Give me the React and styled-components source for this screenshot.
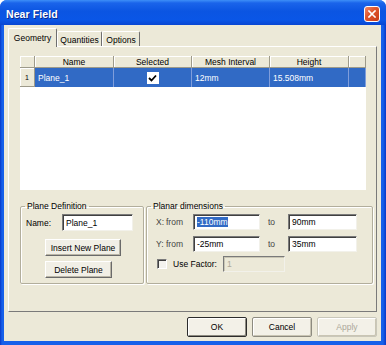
import React from 'react';
import styled, { createGlobalStyle } from 'styled-components';

const GlobalStyle = createGlobalStyle`
    html, body {
        margin: 0;
        padding: 0;
        background: #ffffff;
    }
    body {
        width: 386px;
        height: 345px;
        overflow: hidden;
        font-family: "Liberation Sans", Arial, sans-serif;
        font-size: 8.5px;
        color: #000;
    }
`;

const Window = styled.div`
    width: 386px;
    height: 345px;
    display: flex;
    flex-direction: column;
    border-radius: 7px 7px 0 0;
    overflow: hidden;
    background: linear-gradient(to right, #0838c8 0, #1660ea 2px, #1660ea 383px, #0838c8 386px);
    box-sizing: border-box;
`;

const TitleBar = styled.div`
    height: 25px;
    flex: none;
    display: flex;
    align-items: center;
    justify-content: space-between;
    padding: 3px 6px 0 6px;
    box-sizing: border-box;
    background: linear-gradient(to bottom, #3d8ff8 0, #1a64ea 12%, #0b55e2 45%, #0a56e6 80%, #0846d2 100%);
`;

const Title = styled.span`
    color: #fff;
    font-weight: bold;
    font-size: 10.5px;
    text-shadow: 1px 1px 0 #0a2a8a;
    letter-spacing: 0.1px;
`;

const CloseButton = styled.div`
    width: 16px;
    height: 16px;
    box-sizing: border-box;
    border: 1px solid #ffffff;
    border-radius: 3px;
    background: linear-gradient(135deg, #f08a6a 0, #e0582f 40%, #c83a16 100%);
    display: flex;
    align-items: center;
    justify-content: center;
`;

const Client = styled.div`
    flex: 1;
    margin: 0 5px 4px 4px;
    background: #ece9d8;
    padding: 3px 0 0 4px;
    display: flex;
    flex-direction: column;
`;

const TabStrip = styled.div`
    display: flex;
    align-items: flex-end;
    height: 18px;
    position: relative;
    z-index: 1;
`;

const Tab = styled.div`
    width: ${(p) => p.$w}px;
    height: ${(p) => (p.$active ? 19 : 15)}px;
    margin-bottom: ${(p) => (p.$active ? -1 : 0)}px;
    box-sizing: border-box;
    display: flex;
    align-items: center;
    justify-content: center;
    background: #ece9d8;
    border-top: 1px solid #ffffff;
    border-left: 1px solid #ffffff;
    border-right: 1px solid #6f6f6f;
    border-radius: 2px 2px 0 0;
    padding-top: ${(p) => (p.$active ? 0 : 1)}px;
`;

const Panel = styled.div`
    width: 369px;
    height: 266px;
    box-sizing: border-box;
    border-top: 1px solid #ffffff;
    border-left: 1px solid #ffffff;
    border-right: 1px solid #7a7a7a;
    border-bottom: 1px solid #7a7a7a;
    padding: 9px 0 0 11px;
    display: flex;
    flex-direction: column;
`;

const Grid = styled.div`
    width: 346px;
    height: 134px;
    background: #ffffff;
    display: grid;
    grid-template-columns: 15px 79px 78px 78px 79px 17px;
    grid-template-rows: 12px 19px;
    align-content: start;
`;

const HeadCell = styled.div`
    background: #ece9d8;
    box-sizing: border-box;
    border-right: 1px solid #9d9a8a;
    border-bottom: 1px solid #9d9a8a;
    box-shadow: inset 1px 1px 0 #ffffff;
    display: flex;
    align-items: center;
    justify-content: center;
    font-size: ${(p) => (p.$small ? '7px' : '8.5px')};
`;

const Cell = styled.div`
    background: #316ac5;
    color: #ffffff;
    box-sizing: border-box;
    border-right: 1px solid #7f9ddb;
    display: flex;
    align-items: center;
    justify-content: ${(p) => (p.$center ? 'center' : 'flex-start')};
    padding-left: ${(p) => (p.$center ? 0 : 3)}px;
`;

const CheckBox = styled.div`
    width: 12px;
    height: 12px;
    background: #ffffff;
    display: flex;
    align-items: center;
    justify-content: center;
`;

const GroupRow = styled.div`
    display: flex;
    gap: 2px;
    margin-top: 11px;
`;

const Group = styled.fieldset`
    margin: 0;
    width: ${(p) => p.$w}px;
    height: 83px;
    box-sizing: border-box;
    min-inline-size: 0;
    border: 1px solid #b2ae9c;
    border-radius: 2px;
    box-shadow: 1px 1px 0 #ffffff, inset 1px 1px 0 #ffffff;
    padding: 3px 0 0 ${(p) => p.$pl}px;
`;

const Legend = styled.legend`
    padding: 0 2px;
    margin-left: ${(p) => p.$ml}px;
    font-size: 8.5px;
    line-height: 10px;
`;

const FieldRow = styled.div`
    display: flex;
    align-items: center;
    height: ${(p) => p.$h}px;
    margin-bottom: ${(p) => p.$mb}px;
`;

const Label = styled.span`
    width: ${(p) => p.$w}px;
    flex: none;
    padding-left: ${(p) => p.$pl || 0}px;
    box-sizing: border-box;
    color: ${(p) => (p.$muted ? '#444' : '#000')};
`;

const TextBox = styled.div`
    width: ${(p) => p.$w}px;
    height: 100%;
    flex: none;
    box-sizing: border-box;
    background: ${(p) => (p.$disabled ? '#ece9d8' : '#ffffff')};
    color: ${(p) => (p.$disabled ? '#aca899' : '#000')};
    border-top: 1px solid #7a7a7a;
    border-left: 1px solid #7a7a7a;
    border-right: 1px solid #f2f1ea;
    border-bottom: 1px solid #f2f1ea;
    box-shadow: inset 1px 1px 0 ${(p) => (p.$disabled ? '#c9c6b4' : '#404040')};
    padding-left: 3px;
    display: flex;
    align-items: center;
`;

const Highlight = styled.span`
    background: #316ac5;
    color: #fff;
`;

const ButtonColumn = styled.div`
    display: flex;
    flex-direction: column;
    align-items: flex-start;
    gap: 5px;
    margin: 8px 0 0 ${(p) => p.$ml}px;
`;

const SmallButton = styled.div`
    width: ${(p) => p.$w}px;
    height: 17px;
    box-sizing: border-box;
    display: flex;
    align-items: center;
    justify-content: center;
    background: #f1efe6;
    border-top: 1px solid #ffffff;
    border-left: 1px solid #ffffff;
    border-right: 1px solid #6a6a6a;
    border-bottom: 1px solid #6a6a6a;
    box-shadow: inset -1px -1px 0 #b9b5a6;
`;

const Check = styled.div`
    width: 10px;
    height: 10px;
    box-sizing: border-box;
    border-top: 1px solid #7a7a7a;
    border-left: 1px solid #7a7a7a;
    border-right: 1px solid #fff;
    border-bottom: 1px solid #fff;
    box-shadow: inset 1px 1px 0 #404040;
    background: #f4f3ee;
    margin-left: 1px;
    margin-right: 6px;
`;

const Footer = styled.div`
    display: flex;
    justify-content: flex-end;
    gap: 5px;
    padding: 5px 4px 0 0;
`;

const DialogButton = styled.div`
    width: 60px;
    height: 20px;
    box-sizing: border-box;
    display: flex;
    align-items: center;
    justify-content: center;
    background: #f3f1e8;
    border: 1px solid ${(p) => (p.$default ? '#2c2c2c' : p.$disabled ? '#c9c7ba' : '#8d8b80')};
    box-shadow: ${(p) => (p.$default ? 'inset 1px 1px 0 #fff, inset -1px -1px 0 #8d8b80' : 'inset 1px 1px 0 #fff, inset -1px -1px 0 #c9c5b4')};
    color: ${(p) => (p.$disabled ? '#aca899' : '#000')};
    border-radius: 2px;
`;

export default function App() {
    return (
        <>
            <GlobalStyle />
            <Window>
                <TitleBar>
                    <Title>Near Field</Title>
                    <CloseButton>
                        <svg width="8" height="8" viewBox="0 0 8 8">
                            <path d="M1 1 L7 7 M7 1 L1 7" stroke="#fff" strokeWidth="1.6" strokeLinecap="square" />
                        </svg>
                    </CloseButton>
                </TitleBar>
                <Client>
                    <TabStrip>
                        <Tab $active $w={49}>Geometry</Tab>
                        <Tab $w={45}>Quantities</Tab>
                        <Tab $w={38}>Options</Tab>
                    </TabStrip>
                    <Panel>
                        <Grid>
                            <HeadCell />
                            <HeadCell>Name</HeadCell>
                            <HeadCell>Selected</HeadCell>
                            <HeadCell>Mesh Interval</HeadCell>
                            <HeadCell>Height</HeadCell>
                            <HeadCell />
                            <HeadCell $small>1</HeadCell>
                            <Cell>Plane_1</Cell>
                            <Cell $center>
                                <CheckBox>
                                    <svg width="9" height="8" viewBox="0 0 9 8">
                                        <path d="M1 4 L3.5 6.5 L8 1.5" stroke="#000" strokeWidth="1.8" fill="none" />
                                    </svg>
                                </CheckBox>
                            </Cell>
                            <Cell>12mm</Cell>
                            <Cell>15.508mm</Cell>
                            <Cell />
                        </Grid>
                        <GroupRow>
                            <Group $w={124} $pl={5}>
                                <Legend $ml={-1}>Plane Definition</Legend>
                                <FieldRow $h={17} $mb={0}>
                                    <Label $w={36}>Name:</Label>
                                    <TextBox $w={71}>Plane_1</TextBox>
                                </FieldRow>
                                <ButtonColumn $ml={19}>
                                    <SmallButton $w={76}>Insert New Plane</SmallButton>
                                    <SmallButton $w={67}>Delete Plane</SmallButton>
                                </ButtonColumn>
                            </Group>
                            <Group $w={227} $pl={9}>
                                <Legend $ml={-5}>Planar dimensions</Legend>
                                <FieldRow $h={16} $mb={6}>
                                    <Label $w={10} $muted>X:</Label>
                                    <Label $w={27} $muted>from</Label>
                                    <TextBox $w={67}>
                                        <Highlight>-110mm</Highlight>
                                    </TextBox>
                                    <Label $w={28} $pl={8} $muted>to</Label>
                                    <TextBox $w={69}>90mm</TextBox>
                                </FieldRow>
                                <FieldRow $h={16} $mb={4}>
                                    <Label $w={10} $muted>Y:</Label>
                                    <Label $w={27} $muted>from</Label>
                                    <TextBox $w={67}>-25mm</TextBox>
                                    <Label $w={28} $pl={8} $muted>to</Label>
                                    <TextBox $w={69}>35mm</TextBox>
                                </FieldRow>
                                <FieldRow $h={16} $mb={0}>
                                    <Check />
                                    <Label $w={50}>Use Factor:</Label>
                                    <TextBox $w={62} $disabled>1</TextBox>
                                </FieldRow>
                            </Group>
                        </GroupRow>
                    </Panel>
                    <Footer>
                        <DialogButton $default>OK</DialogButton>
                        <DialogButton>Cancel</DialogButton>
                        <DialogButton $disabled>Apply</DialogButton>
                    </Footer>
                </Client>
            </Window>
        </>
    );
}
